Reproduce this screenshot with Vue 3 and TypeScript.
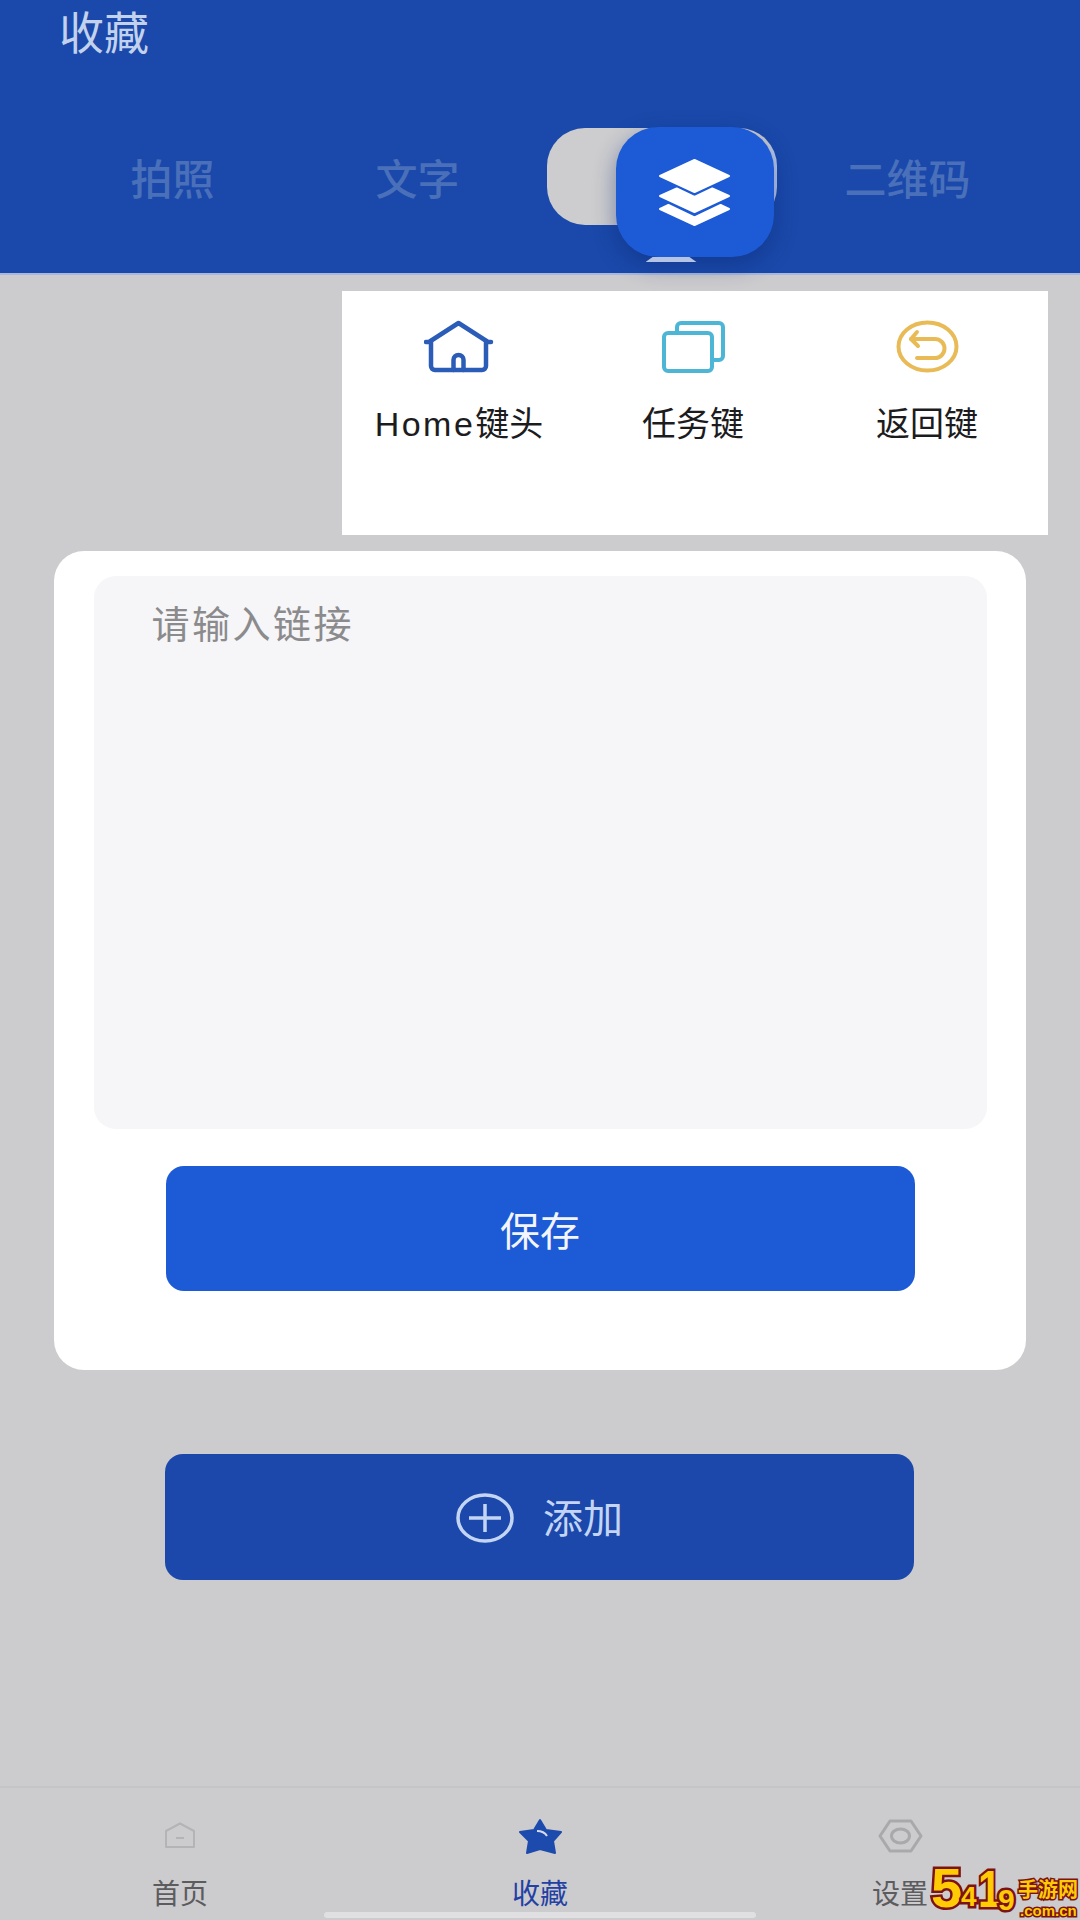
<template>
  <div class="page">
    <header class="top">
      <h1 class="title">收藏</h1>
      <div class="modes">
        <span class="mode">拍照</span>
        <span class="mode">文字</span>
        <div class="pill">
          <div class="tile">
            <svg class="layers" width="80" height="72" viewBox="0 0 80 72">
              <path d="M39.5 4L74 20 39.5 36 5 20Z" />
              <path d="M5 40L21.7 32.5 39.5 41 57.3 32.5 74 40 39.5 56Z" />
              <path d="M5 53L13.4 49 39.5 61.5 65.6 49 74 53 39.5 69Z" />
            </svg>
            <i class="notch"></i>
          </div>
        </div>
        <span class="mode">二维码</span>
      </div>
    </header>

    <section class="keys">
      <div class="key">
        <svg width="70" height="53" viewBox="0 0 70 53" fill="none" stroke="#2a5cb8" stroke-width="4.5" stroke-linejoin="round" stroke-linecap="round">
          <path d="M2 22H5L34.5 3 64 22H67" />
          <path d="M7 21V46a4 4 0 0 0 4 4H58a4 4 0 0 0 4-4V21" />
          <path d="M29.5 50V40a5 5 0 0 1 10 0V50" />
        </svg>
        <span><span class="latin">Home</span>键头</span>
      </div>
      <div class="key">
        <svg width="65" height="53" viewBox="0 0 65 53" fill="none" stroke="#4db6d6" stroke-width="4" stroke-linejoin="round">
          <rect x="3" y="13" width="48" height="38" rx="4" />
          <path d="M16 12V7a4 4 0 0 1 4-4H58a4 4 0 0 1 4 4V36a4 4 0 0 1-4 4H52" />
        </svg>
        <span>任务键</span>
      </div>
      <div class="key">
        <svg width="65" height="53" viewBox="0 1 65 53" fill="none" stroke="#e9bb57" stroke-width="4" stroke-linejoin="round" stroke-linecap="round">
          <ellipse cx="32.5" cy="27.5" rx="29" ry="24" />
          <path d="M22 13L16 20 23 27" />
          <path d="M16 20H40a9.5 9.5 0 0 1 0 19H22" />
        </svg>
        <span>返回键</span>
      </div>
    </section>

    <section class="card">
      <div class="input">
        <span class="placeholder">请输入链接</span>
      </div>
      <button class="save" type="button">保存</button>
    </section>

    <button class="add" type="button">
      <svg width="58" height="50" viewBox="0 0 58 50" fill="none" stroke="#c3d5f3" stroke-width="3.5">
        <ellipse cx="29" cy="25" rx="27" ry="23" />
        <path d="M13 25H45M29 11V39" />
      </svg>
      <span>添加</span>
    </button>

    <nav class="tabbar">
      <div v-for="tab in tabs" :key="tab.label" class="tab" :class="{ active: tab.active }">
        <div class="tab-icon">
          <svg v-if="tab.icon === 'home'" width="34" height="28" viewBox="0 0 34 28" fill="none" stroke="#b4b4b6" stroke-width="2">
            <path d="M3 9L17 1.5 31 9V25H3Z" stroke-linejoin="round" />
            <path d="M13 16H21" />
          </svg>
          <svg v-else-if="tab.icon === 'star'" width="46" height="38" viewBox="0 0 46 38">
            <path fill="#1c4bad" stroke="#1c4bad" stroke-width="2" stroke-linejoin="round" d="M23 3L29 13 44 15 36 24 38 36 23 32 10 36 12 24 3 15 17 13Z" />
            <path fill="none" stroke="#d6dcec" stroke-width="2" d="M20 14Q27 14 30 19" />
          </svg>
          <svg v-else width="45" height="34" viewBox="0 0 45 34" fill="none" stroke="#a9a9ab" stroke-width="3">
            <path d="M12 2H33L43 17 33 32H12L2 17Z" stroke-linejoin="round" />
            <ellipse cx="22.5" cy="17" rx="9" ry="7" />
          </svg>
        </div>
        <span class="tab-label">{{ tab.label }}</span>
      </div>
      <i class="indicator"></i>
    </nav>

    <div class="mark">
      <span class="digit d5">5</span>
      <span class="digit d4">4</span>
      <span class="digit d1">1</span>
      <span class="digit d9">9</span>
      <span class="mark-cn">手游网</span>
      <span class="mark-url">.com.cn</span>
    </div>
  </div>
</template>

<script setup lang="ts">
interface Tab {
  label: string
  icon: 'home' | 'star' | 'gear'
  active?: boolean
}

const tabs: Tab[] = [
  { label: '首页', icon: 'home' },
  { label: '收藏', icon: 'star', active: true },
  { label: '设置', icon: 'gear' },
]
</script>

<style>
html,
body {
  margin: 0;
  background: #cccbce;
}
</style>

<style scoped>
.page {
  position: relative;
  display: flex;
  flex-direction: column;
  width: 1080px;
  height: 1920px;
  overflow: hidden;
  background: #cccbce;
  font-family: "Liberation Sans", "Noto Sans CJK SC", sans-serif;
}
.top {
  box-sizing: border-box;
  height: 275px;
  padding: 0 50px;
  background: #1a49ab;
  border-bottom: 2px solid #a9b9de;
}
.title {
  margin: 0 0 0 9px;
  height: 64px;
  line-height: 70px;
  font-size: 45px;
  font-weight: 400;
  color: #c3d2ec;
}
.modes {
  display: grid;
  grid-template-columns: repeat(4, 245px);
  align-items: center;
  justify-items: center;
  height: 97px;
  margin-top: 64px;
}
.mode {
  font-size: 42px;
  font-weight: 500;
  color: #4a70ba;
}
.pill {
  position: relative;
  width: 230px;
  height: 97px;
  margin-right: 2px;
  border-radius: 38px;
  background: linear-gradient(to right, #cdcdcf 96%, #bccbec 98%);
}
.tile {
  position: absolute;
  left: 69px;
  top: -1px;
  display: flex;
  align-items: center;
  justify-content: center;
  width: 158px;
  height: 130px;
  border-radius: 42px;
  background: #1c5ad6;
  box-shadow: 0 8px 22px rgba(10, 40, 110, 0.45);
}
.layers path {
  fill: #fff;
  stroke: #fff;
  stroke-width: 2;
  stroke-linejoin: round;
}
.notch {
  position: absolute;
  left: 30px;
  bottom: -5px;
  width: 51px;
  height: 5px;
  background: #b5c3e4;
  clip-path: polygon(14% 0, 86% 0, 100% 100%, 0 100%);
}
.keys {
  display: grid;
  grid-template-columns: repeat(3, 1fr);
  align-self: flex-end;
  box-sizing: border-box;
  width: 706px;
  height: 244px;
  margin: 16px 32px 0 0;
  padding: 29px 4px 0 0;
  background: #fff;
}
.key {
  display: flex;
  flex-direction: column;
  align-items: center;
  gap: 27px;
  height: 130px;
  font-size: 34px;
  line-height: 48px;
  color: #1c1c1e;
}
.latin {
  letter-spacing: 2.5px;
}
.card {
  display: flex;
  flex-direction: column;
  align-items: center;
  box-sizing: border-box;
  width: 972px;
  height: 819px;
  margin: 16px 0 0 54px;
  padding-top: 25px;
  border-radius: 30px;
  background: #fff;
}
.input {
  box-sizing: border-box;
  width: 893px;
  height: 553px;
  padding: 23px 58px;
  border-radius: 22px;
  background: #f6f5f7;
}
.placeholder {
  font-size: 38px;
  letter-spacing: 2.5px;
  line-height: 52px;
  color: #8b8b8d;
}
.save,
.add {
  display: flex;
  align-items: center;
  justify-content: center;
  border: 0;
  padding: 0;
  font-family: inherit;
}
.save {
  flex: none;
  width: 749px;
  height: 125px;
  margin-top: 37px;
  border-radius: 18px;
  background: #1d5ad6;
  font-size: 40px;
  color: #f2f5fc;
}
.add {
  gap: 29px;
  width: 749px;
  height: 126px;
  margin: 84px 0 0 165px;
  border-radius: 18px;
  background: #1b48aa;
  font-size: 40px;
  color: #c3d5f3;
}
.add svg {
  margin-top: 1px;
}
.add span {
  margin-top: -2px;
}
.tabbar {
  position: relative;
  display: grid;
  grid-template-columns: repeat(3, 1fr);
  box-sizing: border-box;
  height: 134px;
  margin-top: auto;
  padding-top: 28px;
  border-top: 2px solid #c5c4c7;
}
.tab {
  display: flex;
  flex-direction: column;
  align-items: center;
  font-size: 28px;
  color: #5c5c5e;
}
.tab.active {
  color: #2341a4;
}
.tab-icon {
  display: flex;
  align-items: center;
  justify-content: center;
  height: 40px;
}
.tab-label {
  margin-top: 21px;
  line-height: 36px;
}
.indicator {
  position: absolute;
  left: 324px;
  bottom: 2px;
  width: 432px;
  height: 6px;
  border-radius: 3px;
  background: #e0e0e2;
}
.mark {
  position: absolute;
  right: 0;
  bottom: 0;
  width: 152px;
  height: 52px;
  font-family: "Liberation Sans", "Noto Sans CJK SC", sans-serif;
  font-weight: 700;
  color: #ffcb05;
  -webkit-text-stroke: 5px #7c1212;
  paint-order: stroke fill;
}
.mark span {
  position: absolute;
  transform-origin: left top;
  line-height: 1;
}
.mark .d5 {
  left: 3px;
  top: -8px;
  font-size: 56px;
}
.mark .d4 {
  left: 33px;
  top: 15px;
  font-size: 28px;
}
.mark .d1 {
  left: 50px;
  top: -5px;
  font-size: 52px;
  transform: scaleX(0.8);
}
.mark .d9 {
  left: 70px;
  top: 17px;
  font-size: 30px;
}
.mark .mark-cn {
  left: 90px;
  top: 12px;
  font-size: 20px;
  -webkit-text-stroke-width: 3px;
}
.mark .mark-url {
  left: 92px;
  top: 35px;
  font-size: 15px;
  -webkit-text-stroke-width: 3px;
}
</style>
